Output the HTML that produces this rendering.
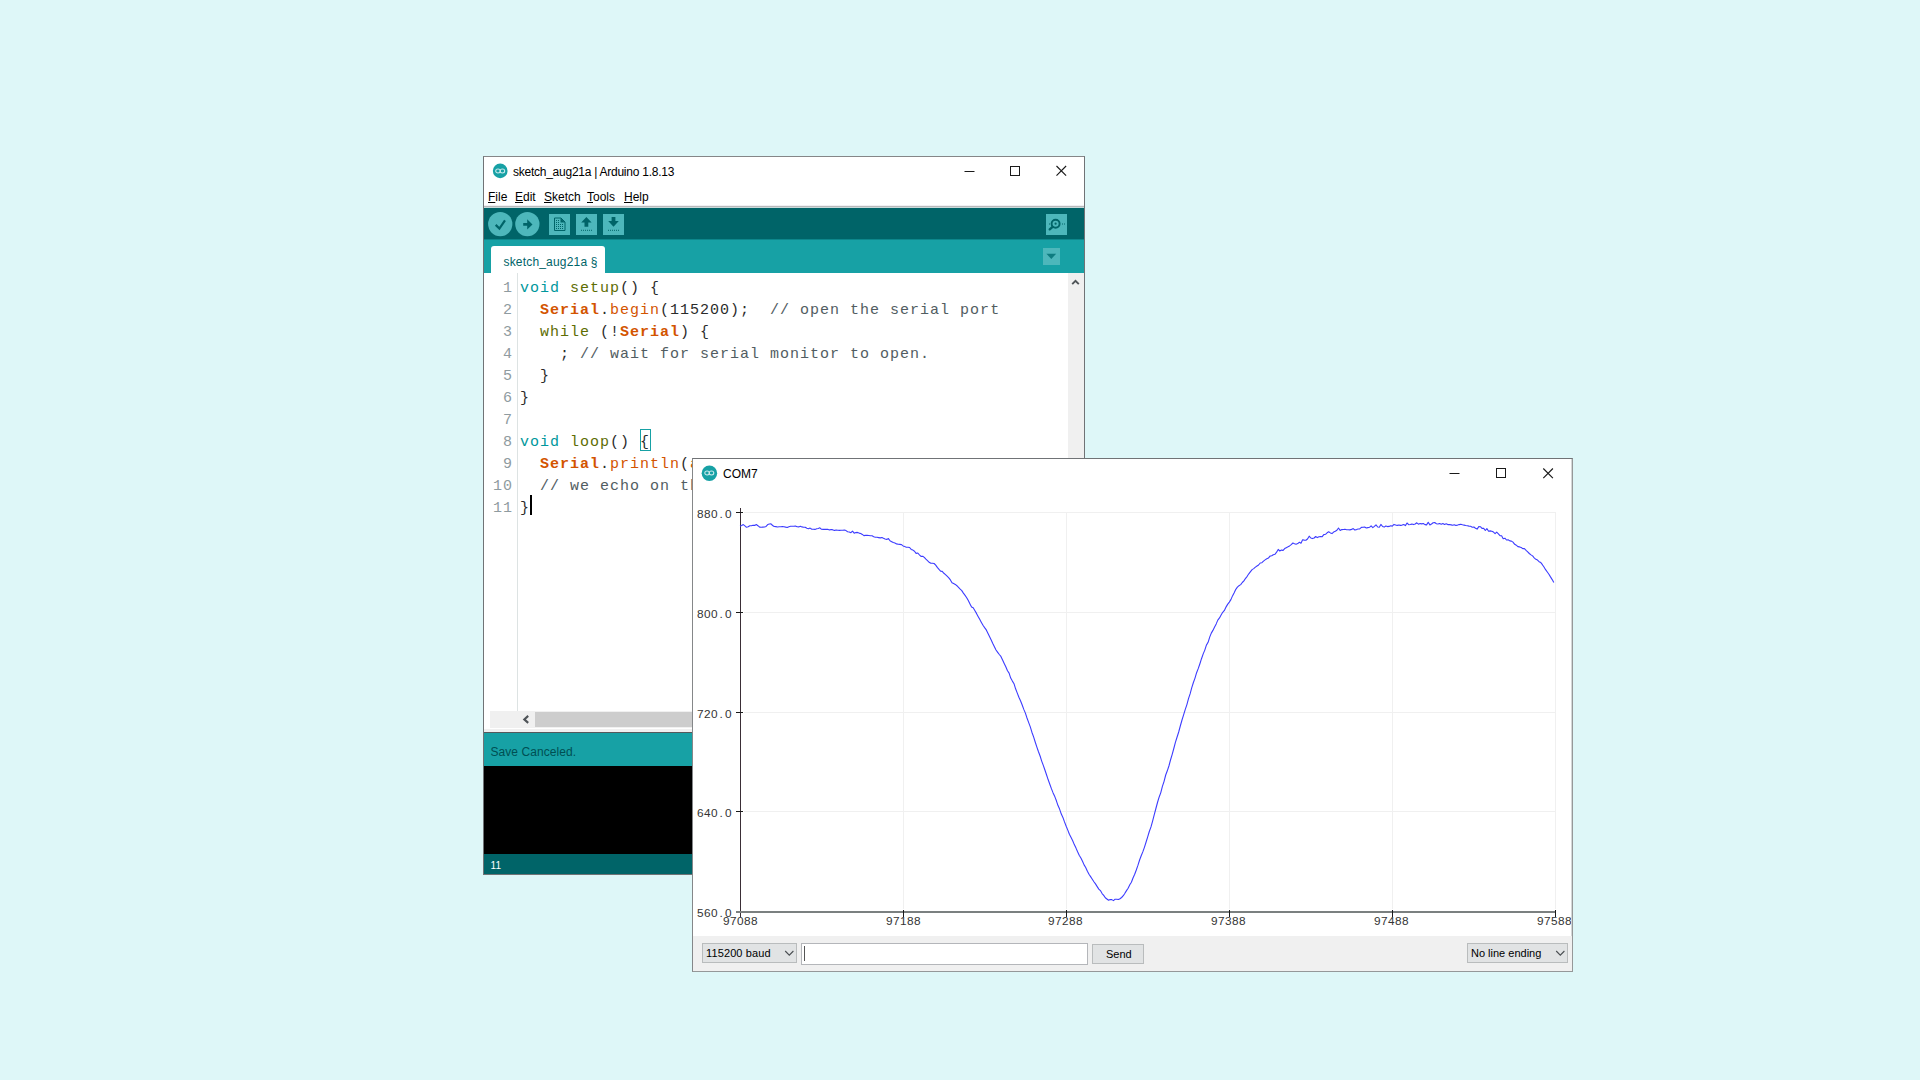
<!DOCTYPE html>
<html lang="en"><head><meta charset="utf-8"><title>Arduino Serial Plotter</title>
<style>
html,body{margin:0;padding:0}
body{width:1920px;height:1080px;overflow:hidden;position:relative;background:#def7f8;font-family:"Liberation Sans",sans-serif;}
.a{position:absolute}
.ui{font-family:"Liberation Sans",sans-serif;font-size:12px;color:#000;white-space:pre;line-height:14px}
.code{font-family:"Liberation Mono",monospace;font-size:15px;letter-spacing:1px;line-height:22px;white-space:pre;color:#2b2b2b}
.ln{position:absolute;left:484px;width:29px;text-align:right;color:#8f9ba0;height:22px}
.cl{position:absolute;left:520px;height:22px}
.t{color:#00979c}.f{color:#5e6d03}.k{color:#d35400;font-weight:bold}.m{color:#d35400}.c{color:#525d62}.w{color:#5e6d03}.p{color:#000}
.ax{font-family:"Liberation Sans",sans-serif;font-size:10px;letter-spacing:0.37px;line-height:10px;color:#343434;white-space:pre;transform:scaleX(1.18);transform-origin:0 0}
.ax i{font-style:normal;padding:0 1.39px}
.tah{font-family:"Liberation Sans",sans-serif;font-size:11px;color:#000;white-space:pre;line-height:13px}
</style></head><body>

<!-- ================= Arduino IDE window ================= -->
<div class="a" id="ide" style="left:483px;top:156px;width:602px;height:719px;background:#fff;box-sizing:border-box;border:1px solid #707376;border-top-color:#858688"></div>

<!-- title bar -->
<svg class="a" style="left:491px;top:162px" width="18" height="18" viewBox="0 0 18 18">
  <circle cx="9.2" cy="8.9" r="7.35" fill="#17a1a5"/>
  <g fill="none" stroke="#c9e9ec" stroke-width="1.05"><ellipse cx="7" cy="8.9" rx="2.3" ry="2"/><ellipse cx="11.4" cy="8.9" rx="2.3" ry="2"/></g>
</svg>
<div class="a ui" id="title1" style="left:513px;top:165px;letter-spacing:-0.25px">sketch_aug21a | Arduino 1.8.13</div>
<svg class="a" style="left:946px;top:157px" width="138" height="30" viewBox="0 0 138 30" fill="none" stroke="#1a1a1a" stroke-width="1">
  <path d="M18.5 14.5h10"/>
  <rect x="64.5" y="9.5" width="9" height="9"/>
  <path d="M110.5 9l9.6 9.6M120.1 9l-9.6 9.6" stroke-width="1.15"/>
</svg>

<!-- menu bar -->
<div class="a ui" style="left:488px;top:190px" id="m1"><u>F</u>ile</div>
<div class="a ui" style="left:515px;top:190px" id="m2"><u>E</u>dit</div>
<div class="a ui" style="left:544px;top:190px" id="m3"><u>S</u>ketch</div>
<div class="a ui" style="left:587px;top:190px" id="m4"><u>T</u>ools</div>
<div class="a ui" style="left:624px;top:190px" id="m5"><u>H</u>elp</div>
<div class="a" style="left:484px;top:205px;width:600px;height:1px;background:#f0f0f3"></div>
<div class="a" style="left:484px;top:206px;width:600px;height:1px;background:#b9b9bb"></div>
<div class="a" style="left:484px;top:207px;width:600px;height:1px;background:#c8dada"></div>

<!-- toolbar -->
<div class="a" style="left:484px;top:208px;width:600px;height:32px;background:#006468"></div>
<svg class="a" style="left:484px;top:208px" width="600" height="32" viewBox="0 0 600 32">
  <g fill="#4db7bb">
    <circle cx="16.25" cy="16.1" r="12.15"/>
    <circle cx="43.35" cy="16.1" r="12.15"/>
    <rect x="65" y="6" width="21" height="21"/>
    <rect x="92" y="6" width="21" height="21"/>
    <rect x="119" y="6" width="21" height="21"/>
    <rect x="562" y="6" width="21" height="21"/>
  </g>
  <!-- verify check -->
  <path d="M11.7 16.9l3.7 3.7 5.6-8.3" fill="none" stroke="#006468" stroke-width="2.2"/>
  <!-- upload arrow -->
  <path d="M39.2 15.1h4v-3.9l5.3 5.2-5.3 5.2v-3.9h-4z" fill="#006468"/>
  <!-- new -->
  <path d="M70.5 10h6.5l4 4v8.5h-10.5z" fill="none" stroke="#006468" stroke-width="1"/>
  <path d="M76.5 10v4.5h4.5z" fill="#006468"/>
  <g fill="#006468"><rect x="72" y="12" width="1" height="1"/><rect x="74" y="12" width="1" height="1"/><rect x="72" y="14" width="1" height="1"/><rect x="74" y="14" width="1" height="1"/><rect x="72" y="16" width="1" height="1"/><rect x="74" y="16" width="1" height="1"/><rect x="76" y="16" width="1" height="1"/><rect x="78" y="16" width="1" height="1"/><rect x="72" y="18" width="1" height="1"/><rect x="74" y="18" width="1" height="1"/><rect x="76" y="18" width="1" height="1"/><rect x="78" y="18" width="1" height="1"/><rect x="72" y="20" width="1" height="1"/><rect x="74" y="20" width="1" height="1"/><rect x="76" y="20" width="1" height="1"/><rect x="78" y="20" width="1" height="1"/></g>
  <!-- open (up arrow) -->
  <path d="M102.4 9l5.2 5.5h-3.3v4.3h-3.8v-4.3h-3.3z" fill="#006468"/>
  <path d="M97 22.3h11" stroke="#006468" stroke-width="1" stroke-dasharray="1 1"/>
  <!-- save (down arrow) -->
  <path d="M129.5 18.8l-5.3-5.9h3.4v-4h3.8v4h3.4z" fill="#006468"/>
  <path d="M124 22.3h11" stroke="#006468" stroke-width="1" stroke-dasharray="1 1"/>
  <!-- serial monitor -->
  <circle cx="571.6" cy="15.7" r="4" fill="none" stroke="#006468" stroke-width="1.9"/>
  <circle cx="571.6" cy="15.7" r="1.1" fill="#006468"/>
  <path d="M568.6 18.8l-2.9 2.6" stroke="#006468" stroke-width="2.3" stroke-linecap="round"/>
  <path d="M565 16h1M578 16h3" stroke="#006468" stroke-width="1" stroke-dasharray="1 1"/>
</svg>

<!-- tab bar -->
<div class="a" style="left:484px;top:239px;width:600px;height:34px;background:#17a1a5"></div>
<div class="a" style="left:484px;top:239px;width:600px;height:1px;background:#0d878b"></div>
<div class="a" style="left:491px;top:246px;width:114px;height:27px;background:#fff;border-radius:3px 3px 0 0"></div>
<div class="a ui" id="tabtxt" style="left:503.5px;top:255px;color:#006468;letter-spacing:0.18px">sketch_aug21a §</div>
<div class="a" style="left:1043px;top:248px;width:17px;height:17px;background:#4db7bb"></div>
<svg class="a" style="left:1043px;top:248px" width="17" height="17"><path d="M3.4 5.7h9.8l-4.9 5.2z" fill="#0e7c80"/></svg>

<!-- editor -->
<div class="a" style="left:517px;top:273px;width:1px;height:438px;background:#dde3e3"></div>
<div class="a" style="left:1068px;top:273px;width:16px;height:438px;background:#f0f0f0"></div>
<svg class="a" style="left:1068px;top:273px" width="16" height="17"><path d="M4.2 11.2l3.3-3.4 3.3 3.4" fill="none" stroke="#4f5458" stroke-width="1.9"/></svg>
<div class="a" style="left:490px;top:711px;width:594px;height:16.6px;background:#f0f0f0"></div>
<div class="a" style="left:535px;top:712px;width:200px;height:14.6px;background:#cdcdcd"></div>
<svg class="a" style="left:518px;top:711px" width="17" height="17"><path d="M10.2 4.9l-3.9 3.5 3.9 3.5" fill="none" stroke="#4f5458" stroke-width="2.1"/></svg>
<div class="a" style="left:484px;top:729px;width:600px;height:3px;background:#f0f0f0"></div>
<div class="a" style="left:484px;top:732px;width:600px;height:1px;background:#55595c"></div>

<div class="code">
<div class="ln" style="top:278px">1</div><div class="cl" style="top:278px"><span class="t">void</span> <span class="f">setup</span>() {</div>
<div class="ln" style="top:300px">2</div><div class="cl" style="top:300px">  <span class="k">Serial</span>.<span class="m">begin</span>(115200);  <span class="c">// open the serial port</span></div>
<div class="ln" style="top:322px">3</div><div class="cl" style="top:322px">  <span class="w">while</span> (!<span class="k">Serial</span>) {</div>
<div class="ln" style="top:344px">4</div><div class="cl" style="top:344px">    ; <span class="c">// wait for serial monitor to open.</span></div>
<div class="ln" style="top:366px">5</div><div class="cl" style="top:366px">  }</div>
<div class="ln" style="top:388px">6</div><div class="cl" style="top:388px">}</div>
<div class="ln" style="top:410px">7</div>
<div class="ln" style="top:432px">8</div><div class="cl" style="top:432px"><span class="t">void</span> <span class="f">loop</span>() {</div>
<div class="ln" style="top:454px">9</div><div class="cl" style="top:454px;width:172px;overflow:hidden">  <span class="k">Serial</span>.<span class="m">println</span>(<span class="m">a</span></div>
<div class="ln" style="top:476px">10</div><div class="cl" style="top:476px;width:172px;overflow:hidden">  <span class="c">// we echo on th</span></div>
<div class="ln" style="top:498px">11</div><div class="cl" style="top:498px">}</div>
</div>
<div class="a" style="left:640px;top:429px;width:11px;height:22px;box-sizing:border-box;border:1px solid #17a1a5"></div>
<div class="a" style="left:530px;top:495px;width:2px;height:20px;background:#000"></div>

<!-- status / console -->
<div class="a" style="left:484px;top:733px;width:600px;height:33px;background:#17a1a5"></div>
<div class="a ui" id="stat" style="left:490.5px;top:745px;color:#004f53;letter-spacing:0.06px">Save Canceled.</div>
<div class="a" style="left:484px;top:766px;width:600px;height:88px;background:#000"></div>
<div class="a" style="left:484px;top:854px;width:600px;height:20px;background:#006468"></div>
<div class="a ui" id="lnst" style="left:490.5px;top:860px;color:#fff;font-size:10px;line-height:12px;letter-spacing:0.3px">11</div>

<!-- ================= Serial Plotter window ================= -->
<div class="a" id="plt" style="left:692px;top:458px;width:881px;height:514px;background:#fff;box-sizing:border-box;border:1px solid #959899;border-left-color:#858789;border-top-color:#707376"></div>
<svg class="a" style="left:700px;top:464px" width="18" height="18" viewBox="0 0 18 18">
  <circle cx="9.4" cy="9.15" r="7.75" fill="#17a1a5"/>
  <g fill="none" stroke="#c9e9ec" stroke-width="1.05"><ellipse cx="7.1" cy="9" rx="2.3" ry="2"/><ellipse cx="11.5" cy="9" rx="2.3" ry="2"/></g>
</svg>
<div class="a ui" id="title2" style="left:723px;top:467px">COM7</div>
<svg class="a" style="left:1434px;top:459px" width="138" height="30" viewBox="0 0 138 30" fill="none" stroke="#1a1a1a" stroke-width="1">
  <path d="M15.5 14.5h10"/>
  <rect x="62.5" y="9.5" width="9" height="9"/>
  <path d="M109.3 9.5l9.6 9.6M118.9 9.5l-9.6 9.6" stroke-width="1.15"/>
</svg>

<!-- plot -->
<svg class="a" style="left:693px;top:489px" width="879" height="447" viewBox="693 489 879 447">
  <g stroke="#f0f0f0" stroke-width="1" shape-rendering="crispEdges">
    <path d="M744 512.5H1556M744 612.5H1556M744 712.5H1556M744 811.5H1556"/>
    <path d="M903.5 512V909M1066.5 512V909M1229.5 512V909M1392.5 512V909M1555.5 512V909"/>
  </g>
  <g shape-rendering="crispEdges">
    <rect x="740" y="508" width="1" height="409" fill="#3a2e36"/>
    <rect x="736" y="911" width="820" height="2" fill="#7b8080"/>
    <path d="M736 512.5h7M736 612.5h7M736 712.5h7M736 811.5h7" stroke="#1a1a1a" stroke-width="1"/>
    <path d="M903.5 910v7M1066.5 910v7M1229.5 910v7M1392.5 910v7M1555.5 910v7" stroke="#1a1a1a" stroke-width="1"/>
  </g>
  <polyline fill="none" stroke="#3c3cff" stroke-width="1.1" stroke-linejoin="round" points="740.0,526.3 741.6,525.5 743.3,524.6 744.9,525.9 746.5,527.3 748.2,526.8 749.8,525.8 751.4,525.8 753.0,525.2 754.7,525.4 756.3,524.5 757.9,525.7 759.6,527.1 761.2,527.3 762.8,527.1 764.5,527.0 766.1,526.4 767.7,524.6 769.4,524.0 771.0,523.9 772.6,525.5 774.2,526.5 775.9,526.6 777.5,527.0 779.1,526.8 780.8,526.7 782.4,526.6 784.0,526.7 785.7,527.1 787.3,527.4 788.9,526.8 790.6,526.3 792.2,526.2 793.8,526.3 795.4,526.1 797.1,526.8 798.7,526.9 800.3,526.3 802.0,526.9 803.6,527.3 805.2,527.3 806.9,528.3 808.5,528.8 810.1,528.1 811.8,529.3 813.4,529.3 815.0,529.4 816.7,528.8 818.3,528.5 819.9,527.8 821.5,529.3 823.2,529.4 824.8,529.2 826.4,529.4 828.1,529.4 829.7,529.9 831.3,529.5 833.0,529.9 834.6,530.4 836.2,530.0 837.9,530.2 839.5,530.4 841.1,530.3 842.7,530.2 844.4,530.0 846.0,530.6 847.6,531.7 849.3,532.0 850.9,532.7 852.5,531.1 854.2,533.2 855.8,532.6 857.4,532.4 859.1,533.1 860.7,533.5 862.3,534.4 863.9,535.6 865.6,535.4 867.2,535.4 868.8,535.5 870.5,535.8 872.1,535.8 873.7,536.7 875.4,537.3 877.0,537.3 878.6,537.6 880.3,537.9 881.9,537.5 883.5,538.3 885.1,539.0 886.8,539.4 888.4,538.6 890.0,540.8 891.7,541.7 893.3,542.6 894.9,543.1 896.6,543.9 898.2,544.3 899.8,544.4 901.5,544.6 903.1,545.9 904.7,546.6 906.3,547.2 908.0,547.2 909.6,547.5 911.2,549.4 912.9,550.1 914.5,551.2 916.1,553.4 917.8,553.0 919.4,554.8 921.0,556.4 922.7,556.2 924.3,557.4 925.9,559.2 927.5,560.7 929.2,562.3 930.8,563.3 932.4,563.2 934.1,563.5 935.7,565.1 937.3,567.4 939.0,569.4 940.6,571.1 942.2,571.4 943.9,573.3 945.5,574.6 947.1,576.2 948.8,577.9 950.4,579.9 952.0,582.7 953.6,583.5 955.3,584.4 956.9,585.7 958.5,587.4 960.2,589.2 961.8,590.6 963.4,593.1 965.1,595.4 966.7,597.7 968.3,600.6 970.0,603.9 971.6,606.9 973.2,607.8 974.8,610.5 976.5,613.4 978.1,616.4 979.7,619.3 981.4,622.4 983.0,625.3 984.6,627.6 986.3,629.9 987.9,633.2 989.5,636.4 991.2,639.9 992.8,643.4 994.4,646.7 996.0,650.0 997.7,652.3 999.3,654.5 1000.9,656.4 1002.6,660.1 1004.2,663.4 1005.8,666.8 1007.5,670.8 1009.1,673.1 1010.7,678.1 1012.4,681.1 1014.0,683.7 1015.6,688.8 1017.2,692.9 1018.9,697.2 1020.5,700.7 1022.1,704.7 1023.8,709.4 1025.4,713.1 1027.0,718.0 1028.7,722.6 1030.3,726.9 1031.9,732.2 1033.6,736.9 1035.2,742.0 1036.8,746.9 1038.4,751.5 1040.1,756.0 1041.7,761.1 1043.3,765.4 1045.0,770.3 1046.6,775.0 1048.2,779.8 1049.9,784.5 1051.5,788.9 1053.1,792.9 1054.8,796.6 1056.4,800.8 1058.0,805.6 1059.6,809.1 1061.3,814.1 1062.9,817.4 1064.5,821.9 1066.2,826.3 1067.8,830.1 1069.4,834.3 1071.1,837.6 1072.7,840.8 1074.3,844.6 1076.0,848.1 1077.6,851.8 1079.2,855.2 1080.9,858.0 1082.5,861.2 1084.1,864.9 1085.7,867.5 1087.4,871.2 1089.0,874.3 1090.6,876.6 1092.3,879.2 1093.9,881.7 1095.5,883.9 1097.2,886.6 1098.8,889.1 1100.4,890.6 1102.1,893.6 1103.7,895.4 1105.3,897.8 1106.9,899.0 1108.6,900.3 1110.2,899.6 1111.8,899.6 1113.5,900.6 1115.1,899.2 1116.7,899.3 1118.4,899.5 1120.0,898.7 1121.6,897.5 1123.3,895.7 1124.9,893.3 1126.5,890.6 1128.1,888.3 1129.8,884.8 1131.4,882.2 1133.0,878.0 1134.7,874.2 1136.3,870.0 1137.9,865.4 1139.6,860.0 1141.2,855.8 1142.8,851.9 1144.5,847.1 1146.1,842.0 1147.7,836.9 1149.3,831.5 1151.0,826.9 1152.6,821.1 1154.2,814.8 1155.9,808.5 1157.5,802.5 1159.1,797.2 1160.8,792.6 1162.4,786.4 1164.0,781.6 1165.7,775.0 1167.3,770.8 1168.9,766.0 1170.5,760.0 1172.2,754.3 1173.8,748.5 1175.4,742.3 1177.1,737.0 1178.7,732.0 1180.3,726.0 1182.0,720.0 1183.6,714.9 1185.2,709.6 1186.9,704.6 1188.5,698.7 1190.1,693.9 1191.7,687.8 1193.4,682.5 1195.0,678.1 1196.6,672.7 1198.3,668.4 1199.9,663.7 1201.5,658.7 1203.2,653.9 1204.8,650.1 1206.4,645.1 1208.1,642.3 1209.7,637.1 1211.3,633.1 1212.9,630.4 1214.6,627.0 1216.2,623.9 1217.8,620.1 1219.5,617.9 1221.1,615.0 1222.7,612.3 1224.4,610.4 1226.0,607.1 1227.6,604.4 1229.3,602.1 1230.9,599.6 1232.5,595.9 1234.2,592.8 1235.8,589.3 1237.4,587.2 1239.0,585.7 1240.7,584.6 1242.3,582.5 1243.9,580.9 1245.6,578.3 1247.2,576.3 1248.8,573.8 1250.5,571.6 1252.1,569.6 1253.7,568.6 1255.4,567.1 1257.0,566.0 1258.6,565.0 1260.2,563.0 1261.9,562.7 1263.5,561.1 1265.1,559.9 1266.8,558.8 1268.4,558.1 1270.0,556.1 1271.7,555.8 1273.3,554.7 1274.9,554.3 1276.6,552.2 1278.2,549.4 1279.8,551.0 1281.4,550.1 1283.1,550.4 1284.7,548.6 1286.3,547.7 1288.0,546.8 1289.6,545.9 1291.2,544.6 1292.9,543.0 1294.5,543.7 1296.1,544.2 1297.8,543.6 1299.4,542.2 1301.0,543.2 1302.6,539.8 1304.3,540.1 1305.9,540.3 1307.5,539.0 1309.2,536.2 1310.8,538.0 1312.4,538.6 1314.1,538.0 1315.7,536.5 1317.3,537.6 1319.0,536.7 1320.6,536.5 1322.2,536.7 1323.8,534.6 1325.5,534.3 1327.1,532.8 1328.7,531.8 1330.4,532.9 1332.0,533.6 1333.6,532.1 1335.3,531.3 1336.9,530.3 1338.5,528.0 1340.2,530.5 1341.8,529.6 1343.4,529.5 1345.0,529.3 1346.7,529.7 1348.3,529.7 1349.9,529.9 1351.6,529.4 1353.2,528.6 1354.8,530.0 1356.5,529.6 1358.1,529.0 1359.7,528.9 1361.4,527.4 1363.0,527.3 1364.6,527.0 1366.3,528.0 1367.9,527.6 1369.5,527.3 1371.1,525.8 1372.8,527.6 1374.4,526.4 1376.0,524.8 1377.7,527.0 1379.3,527.2 1380.9,524.4 1382.6,526.5 1384.2,527.1 1385.8,526.0 1387.5,526.6 1389.1,526.4 1390.7,525.7 1392.3,526.1 1394.0,524.4 1395.6,524.9 1397.2,525.4 1398.9,525.0 1400.5,525.4 1402.1,525.1 1403.8,524.5 1405.4,525.6 1407.0,523.0 1408.7,524.7 1410.3,524.5 1411.9,524.1 1413.5,524.6 1415.2,524.0 1416.8,522.8 1418.4,524.2 1420.1,523.5 1421.7,523.9 1423.3,523.5 1425.0,524.6 1426.6,524.9 1428.2,522.3 1429.9,524.9 1431.5,524.0 1433.1,522.8 1434.7,522.5 1436.4,523.7 1438.0,524.0 1439.6,523.5 1441.3,524.3 1442.9,523.6 1444.5,524.4 1446.2,523.7 1447.8,524.6 1449.4,524.5 1451.1,524.9 1452.7,525.3 1454.3,524.7 1455.9,525.4 1457.6,525.1 1459.2,524.6 1460.8,524.3 1462.5,524.8 1464.1,525.1 1465.7,525.5 1467.4,525.7 1469.0,526.1 1470.6,526.3 1472.3,527.2 1473.9,527.0 1475.5,528.2 1477.1,529.1 1478.8,526.6 1480.4,526.7 1482.0,528.4 1483.7,528.4 1485.3,530.5 1486.9,528.6 1488.6,531.2 1490.2,530.9 1491.8,531.2 1493.5,532.1 1495.1,533.6 1496.7,532.1 1498.4,533.8 1500.0,535.6 1501.6,535.8 1503.2,538.8 1504.9,538.2 1506.5,540.0 1508.1,539.8 1509.8,540.9 1511.4,541.1 1513.0,542.1 1514.7,544.3 1516.3,545.2 1517.9,546.6 1519.6,546.9 1521.2,547.5 1522.8,548.6 1524.4,548.6 1526.1,550.3 1527.7,551.8 1529.3,553.5 1531.0,554.9 1532.6,555.9 1534.2,557.8 1535.9,559.3 1537.5,560.1 1539.1,561.7 1540.8,562.6 1542.4,564.7 1544.0,567.0 1545.6,569.7 1547.3,572.0 1548.9,574.2 1550.5,576.9 1552.2,579.6 1553.8,582.5"/>
</svg>
<div class="a ax" style="left:697px;top:510px">880<i>.</i>0</div>
<div class="a ax" style="left:697px;top:610px">800<i>.</i>0</div>
<div class="a ax" style="left:697px;top:710px">720<i>.</i>0</div>
<div class="a ax" style="left:697px;top:809px">640<i>.</i>0</div>
<div class="a ax" style="left:697px;top:909px">560<i>.</i>0</div>
<div class="a ax" style="left:723px;top:917px">97088</div>
<div class="a ax" style="left:886px;top:917px">97188</div>
<div class="a ax" style="left:1048px;top:917px">97288</div>
<div class="a ax" style="left:1211px;top:917px">97388</div>
<div class="a ax" style="left:1374px;top:917px">97488</div>
<div class="a ax" style="left:1537px;top:917px;width:29.6px;overflow:hidden">97588</div>

<div class="a" style="left:1571px;top:459px;width:1px;height:512px;background:#d4d7d7"></div>
<!-- bottom controls -->
<div class="a" style="left:693px;top:936px;width:879px;height:35px;background:#f0f0f0"></div>
<div class="a" style="left:702px;top:943px;width:95px;height:20px;box-sizing:border-box;background:#e1e3e4;border:1px solid #b9bcbd"></div>
<div class="a tah" id="baud" style="left:706px;top:947px;letter-spacing:0.12px">115200 baud</div>
<svg class="a" style="left:784px;top:949px" width="11" height="8"><path d="M1.2 2l4.1 4.1 4.1-4.1" fill="none" stroke="#4a4e52" stroke-width="1.1"/></svg>
<div class="a" style="left:801px;top:943px;width:287px;height:22px;box-sizing:border-box;background:#fff;border:1px solid #b4b6ba"></div>
<div class="a" style="left:804px;top:946px;width:1px;height:15px;background:#555"></div>
<div class="a" style="left:1092px;top:944px;width:52px;height:20px;box-sizing:border-box;background:#e1e3e4;border:1px solid #b9bcbd"></div>
<div class="a tah" id="send" style="left:1106px;top:948px">Send</div>
<div class="a" style="left:1467px;top:943px;width:101px;height:20px;box-sizing:border-box;background:#e1e3e4;border:1px solid #b9bcbd"></div>
<div class="a tah" id="nle" style="left:1471px;top:947px">No line ending</div>
<svg class="a" style="left:1555px;top:949px" width="11" height="8"><path d="M1.2 2l4.1 4.1 4.1-4.1" fill="none" stroke="#4a4e52" stroke-width="1.1"/></svg>

</body></html>
